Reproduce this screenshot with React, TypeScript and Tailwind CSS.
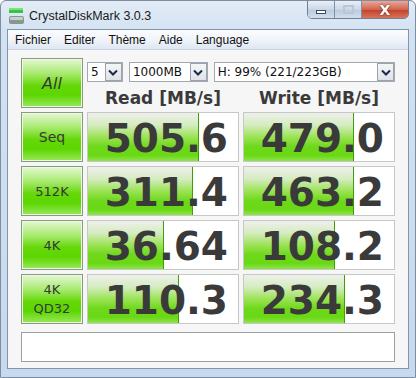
import React from "react";

const rows = [
  { label: ["Seq"], read: "505.6", readBar: 111, write: "479.0", writeBar: 110, big: true },
  { label: ["512K"], read: "311.4", readBar: 105, write: "463.2", writeBar: 110 },
  { label: ["4K"], read: "36.64", readBar: 76, write: "108.2", writeBar: 91 },
  { label: ["4K", "QD32"], read: "110.3", readBar: 91, write: "234.3", writeBar: 101 },
];

const greenBtn =
  "border border-[#8a9a80] bg-[linear-gradient(to_bottom,#e4f7d4_0%,#a8ea70_30%,#66d80a_55%,#5cd600_75%,#9ae85a_100%)] flex flex-col items-center justify-center text-[#383838] leading-[19px] shadow-[inset_0_0_0_1px_#ecfae0]";

function AppIcon() {
  return (
    <svg width="17" height="18" viewBox="0 0 17 18">
      <rect x="1" y="1" width="14" height="5" fill="#35c43a" />
      <rect x="1" y="1" width="14" height="2" fill="#7fe07f" />
      <rect x="1" y="9" width="15" height="8" rx="2" fill="#8d9198" />
      <rect x="2" y="10" width="13" height="3" rx="1" fill="#c9ccd1" />
      <rect x="11" y="13" width="3" height="2" fill="#3ad43a" />
    </svg>
  );
}

function Chevron() {
  return (
    <svg width="10" height="7" viewBox="0 0 10 7">
      <path d="M1 1.5 L5 5.5 L9 1.5" fill="none" stroke="#1c2a48" strokeWidth="2" />
    </svg>
  );
}

function Select({ text, className }: { text: string; className: string }) {
  return (
    <div className={`h-[20px] flex items-center bg-white border border-[#a3a9b1] ${className}`}>
      <span className="flex-1 pl-[3px] text-[12px] text-[#111] leading-none">{text}</span>
      <div className="w-[17px] h-[18px] mr-0 border border-[#9aa3ae] bg-[linear-gradient(to_bottom,#f4f5f7,#dfe3e8)] flex items-center justify-center">
        <Chevron />
      </div>
    </div>
  );
}

function Cell({ value, bar }: { value: string; bar: number }) {
  return (
    <div className="relative h-[50px] border border-[#c6c8c6] bg-white overflow-hidden">
      <div
        className="absolute left-0 top-0 bottom-0 border-r border-[#3e9d08] bg-[linear-gradient(to_bottom,#eef0ec_0%,#d5ecc0_25%,#9be355_50%,#6fd81c_70%,#6ad814_88%,#8ee44c_100%)]"
        style={{ width: bar }}
      />
      <div className="relative h-full flex items-center justify-end pr-[10px] pt-[3px] text-[39px] font-bold text-[#3a3a3a] leading-none">
        {value}
      </div>
    </div>
  );
}

export default function App() {
  return (
    <div
      className="w-[416px] h-[378px] flex flex-col bg-[linear-gradient(to_bottom,#e3ecf6_0px,#d3e2f2_30px,#c7d9ee_100%)] border border-[#7d8ea3] rounded-t-[6px] overflow-hidden"
      style={{ fontFamily: '"DejaVu Sans", sans-serif' }}
    >
      {/* title bar */}
      <div className="h-[28px] flex items-start">
        <div className="flex items-center gap-[4px] pl-[7px] pt-[6px]">
          <AppIcon />
          <span className="text-[12.5px] text-[#1a1a1a]" style={{ fontFamily: '"Liberation Sans", sans-serif' }}>
            CrystalDiskMark 3.0.3
          </span>
        </div>
        <div className="ml-auto mr-[6px] flex h-[19px] -mt-px rounded-b-[5px] border border-[#6f7f94] overflow-hidden">
          <div className="w-[27px] flex items-center justify-center bg-[linear-gradient(to_bottom,#e9eff7,#cad7e7_50%,#b9c9dd_51%,#d3deeb)] border-r border-[#7f8fa4]">
            <div className="w-[10px] h-[4px] bg-white border border-[#3b4a60] mt-[5px]" />
          </div>
          <div className="w-[27px] flex items-center justify-center bg-[linear-gradient(to_bottom,#e9eff7,#cad7e7_50%,#b9c9dd_51%,#d3deeb)] border-r border-[#7f8fa4]">
            <div className="w-[11px] h-[9px] border-2 border-[#b9c6d6] bg-transparent" />
          </div>
          <div className="w-[46px] flex items-center justify-center bg-[linear-gradient(to_bottom,#e8a89a,#d2644e_50%,#c2402a_51%,#d8745a)]">
            <span className="text-[14px] font-bold text-white leading-none [text-shadow:0_0_2px_#4a1a10]">X</span>
          </div>
        </div>
      </div>

      {/* client */}
      <div className="flex-1 mx-[6px] mb-[8px] border border-[#8195ad] flex flex-col bg-[#f6f6f6]">
        <div
          className="h-[20px] flex items-center gap-[13px] px-[7px] text-[12px] text-[#111] bg-[linear-gradient(to_bottom,#fbfcfe,#eef2f8_60%,#dde6f2)] border-b border-[#c9d5e4]"
          style={{ fontFamily: '"Liberation Sans", sans-serif' }}
        >
          <span>Fichier</span>
          <span>Editer</span>
          <span>Thème</span>
          <span>Aide</span>
          <span>Language</span>
        </div>

        <div className="flex-1 pl-[13px] pt-[8px] flex flex-col">
          <div className="grid grid-cols-[62px_152px_152px] gap-x-[4px] gap-y-[4px]">
            <div className={`${greenBtn} h-[50px] text-[16px] italic`}>All</div>
            <div className="col-span-2 flex flex-col">
              <div className="flex mt-[4px]">
                <Select text="5" className="w-[36px]" />
                <Select text="1000MB" className="w-[79px] ml-[6px]" />
                <Select text="H: 99% (221/223GB)" className="w-[182px] ml-[6px]" />
              </div>
              <div className="grid grid-cols-[152px_152px] gap-x-[4px] mt-[6px]">
                <div className="text-center text-[17px] font-bold text-[#3a3a3a] leading-[20px]">Read [MB/s]</div>
                <div className="text-center text-[17px] font-bold text-[#3a3a3a] leading-[20px]">Write [MB/s]</div>
              </div>
            </div>

            {rows.map((r) => (
              <React.Fragment key={r.read}>
                <div className={`${greenBtn} h-[50px] ${r.big ? "text-[14px]" : "text-[13px]"}`}>
                  {r.label.map((l) => (
                    <span key={l}>{l}</span>
                  ))}
                </div>
                <Cell value={r.read} bar={r.readBar} />
                <Cell value={r.write} bar={r.writeBar} />
              </React.Fragment>
            ))}
          </div>
          <div className="mt-[8px] w-[374px] h-[30px] bg-white border border-[#a0a0a0]" />
        </div>
      </div>
    </div>
  );
}
